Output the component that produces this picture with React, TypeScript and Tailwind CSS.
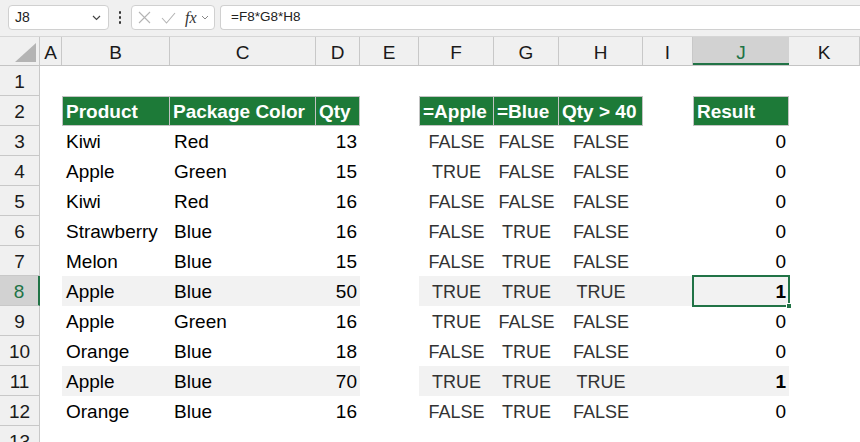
import React from "react";

const colW = [
  "w-[22px]",
  "w-[108px]",
  "w-[146px]",
  "w-[44px]",
  "w-[59px]",
  "w-[75px]",
  "w-[65px]",
  "w-[84px]",
  "w-[50px]",
  "w-[96px]",
  "w-[71px]",
];
const letters = ["A", "B", "C", "D", "E", "F", "G", "H", "I", "J", "K"];

type R = [string, string, number, boolean, boolean, boolean, number];
const data: R[] = [
  ["Kiwi", "Red", 13, false, false, false, 0],
  ["Apple", "Green", 15, true, false, false, 0],
  ["Kiwi", "Red", 16, false, false, false, 0],
  ["Strawberry", "Blue", 16, false, true, false, 0],
  ["Melon", "Blue", 15, false, true, false, 0],
  ["Apple", "Blue", 50, true, true, true, 1],
  ["Apple", "Green", 16, true, false, false, 0],
  ["Orange", "Blue", 18, false, true, false, 0],
  ["Apple", "Blue", 70, true, true, true, 1],
  ["Orange", "Blue", 16, false, true, false, 0],
];

function RowHeader({ n, selected }: { n: number; selected?: boolean }) {
  return (
    <div
      className={
        selected
          ? "w-[40px] shrink-0 h-[30px] bg-[#d2d2d2] border-b border-[#c8c8c8] border-r-2 border-r-[#217346] text-[#217346] text-[19px] leading-[26px] pt-[3px] text-center"
          : "w-[40px] shrink-0 h-[30px] bg-[#f0f0f0] border-b border-r border-[#c8c8c8] text-[#1a1a1a] text-[19px] leading-[26px] pt-[3px] text-center"
      }
    >
      {n}
    </div>
  );
}

function Cell({
  i,
  children,
  className = "",
}: {
  i: number;
  children?: React.ReactNode;
  className?: string;
}) {
  return <div className={`${colW[i]} shrink-0 h-[30px] relative ${className}`}>{children}</div>;
}

const hdr =
  "bg-[#1d7a38] text-white font-bold text-[19px] leading-[26px] pt-[2px] pl-[3px] border-t border-b border-r border-[#c3c3c3] whitespace-nowrap overflow-hidden";

function BoolCell({ i, v, band }: { i: number; v: boolean; band: boolean }) {
  return (
    <Cell
      i={i}
      className={`${band ? "bg-[#f2f2f2]" : ""} text-center text-[18px] leading-[27px] pt-[2.5px] text-[#333333]`}
    >
      {v ? "TRUE" : "FALSE"}
    </Cell>
  );
}

export default function App() {
  return (
    <div className="w-[860px] h-[442px] overflow-hidden bg-white font-['Liberation_Sans',Arial,sans-serif] text-black">
      {/* Formula bar */}
      <div className="h-[37px] bg-[#f0f0f0] border-b border-[#d6d6d6] flex items-start pt-[5px]">
        <div className="ml-[8px] w-[101px] h-[25px] bg-white border border-[#d0d0d0] rounded-[4px] flex items-center justify-between pl-[6px] pr-[7px]">
          <span className="text-[14px] text-[#222]">J8</span>
          <svg width="9" height="6" viewBox="0 0 9 6">
            <path d="M1 1 L4.5 4.5 L8 1" fill="none" stroke="#444" strokeWidth="1.2" />
          </svg>
        </div>
        <div className="w-[22px] h-[25px] flex flex-col items-center justify-center gap-[2.5px]">
          <div className="w-[2.5px] h-[2.5px] rounded-full bg-[#333]" />
          <div className="w-[2.5px] h-[2.5px] rounded-full bg-[#333]" />
          <div className="w-[2.5px] h-[2.5px] rounded-full bg-[#333]" />
        </div>
        <div className="w-[84px] h-[25px] bg-white border border-[#d0d0d0] rounded-[4px] flex items-center pl-[5px]">
          <svg width="13" height="13" viewBox="0 0 13 13" className="ml-[1px]">
            <path d="M1 1 L12 12 M12 1 L1 12" stroke="#b4b4b4" strokeWidth="1.1" />
          </svg>
          <svg width="15" height="12" viewBox="0 0 15 12" className="ml-[10px]">
            <path d="M1 6 L5.5 11 L14 1" fill="none" stroke="#b4b4b4" strokeWidth="1.1" />
          </svg>
          <span className="ml-[9px] text-[16px] italic font-['Liberation_Serif',serif] text-[#333] leading-none">
            fx
          </span>
          <svg width="8" height="5" viewBox="0 0 8 5" className="ml-[4px]">
            <path d="M1 1 L4 4 L7 1" fill="none" stroke="#888" strokeWidth="1" />
          </svg>
        </div>
        <div className="ml-[5px] flex-1 h-[25px] bg-white border border-r-0 border-[#d0d0d0] rounded-l-[4px] flex items-center pl-[10px]">
          <span className="text-[13.5px] text-[#222]">=F8*G8*H8</span>
        </div>
      </div>

      {/* Column headers */}
      <div className="flex h-[29px] bg-[#f0f0f0] border-b border-[#c4c4c4]">
        <div className="w-[40px] shrink-0 h-full border-r border-[#c8c8c8] relative">
          <svg width="40" height="28" viewBox="0 0 40 28" className="absolute left-0 top-0">
            <path d="M36 6 L36 25 L15 25 Z" fill="#b4b4b4" />
          </svg>
        </div>
        {letters.map((l, i) => (
          <div
            key={l}
            className={
              l === "J"
                ? `${colW[i]} shrink-0 h-full bg-[#d2d2d2] border-b-2 border-[#217346] text-[#217346] text-[19px] leading-[24px] pt-[3.5px] text-center`
                : `${colW[i]} shrink-0 h-full border-r border-[#c8c8c8] text-[#1a1a1a] text-[19px] leading-[24px] pt-[3.5px] text-center`
            }
          >
            {l}
          </div>
        ))}
      </div>

      {/* Row 1 */}
      <div className="flex h-[30px]">
        <RowHeader n={1} />
      </div>

      {/* Row 2 - headers */}
      <div className="flex h-[30px]">
        <RowHeader n={2} />
        <Cell i={0} />
        <Cell i={1} className={`${hdr} border-l`}>
          Product
        </Cell>
        <Cell i={2} className={hdr}>
          Package Color
        </Cell>
        <Cell i={3} className={hdr}>
          Qty
        </Cell>
        <Cell i={4} />
        <Cell i={5} className={`${hdr} border-l`}>
          =Apple
        </Cell>
        <Cell i={6} className={hdr}>
          =Blue
        </Cell>
        <Cell i={7} className={hdr}>
          Qty &gt; 40
        </Cell>
        <Cell i={8} />
        <Cell i={9} className={`${hdr} border-l`}>
          Result
        </Cell>
      </div>

      {data.map((r, idx) => {
        const n = idx + 3;
        const band = n === 8 || n === 11;
        const sel = n === 8;
        const bg = band ? "bg-[#f2f2f2]" : "";
        return (
          <div key={n} className="flex h-[30px]">
            <RowHeader n={n} selected={sel} />
            <Cell i={0} />
            <Cell i={1} className={`${bg} text-[19px] leading-[27px] pt-[2px] pl-[4px] whitespace-nowrap`}>
              {r[0]}
            </Cell>
            <Cell i={2} className={`${bg} text-[19px] leading-[27px] pt-[2px] pl-[4px]`}>
              {r[1]}
            </Cell>
            <Cell i={3} className={`${bg} text-[19px] leading-[27px] pt-[2px] pr-[3px] text-right`}>
              {r[2]}
            </Cell>
            <Cell i={4} />
            <BoolCell i={5} v={r[3]} band={band} />
            <BoolCell i={6} v={r[4]} band={band} />
            <BoolCell i={7} v={r[5]} band={band} />
            <Cell i={8} className={bg} />
            <Cell
              i={9}
              className={`${bg} text-[19px] leading-[27px] pt-[2px] pr-[3px] text-right ${r[6] === 1 ? "font-bold" : ""}`}
            >
              {r[6]}
              {sel && (
                <>
                  <div className="absolute -left-[1px] -top-[1px] -right-[1px] -bottom-[1px] border-2 border-[#217346]" />
                  <div className="absolute left-[93px] top-[27px] w-[6px] h-[6px] bg-[#217346] border border-white" />
                </>
              )}
            </Cell>
          </div>
        );
      })}

      {/* Row 13 */}
      <div className="flex h-[30px]">
        <RowHeader n={13} />
      </div>
    </div>
  );
}
